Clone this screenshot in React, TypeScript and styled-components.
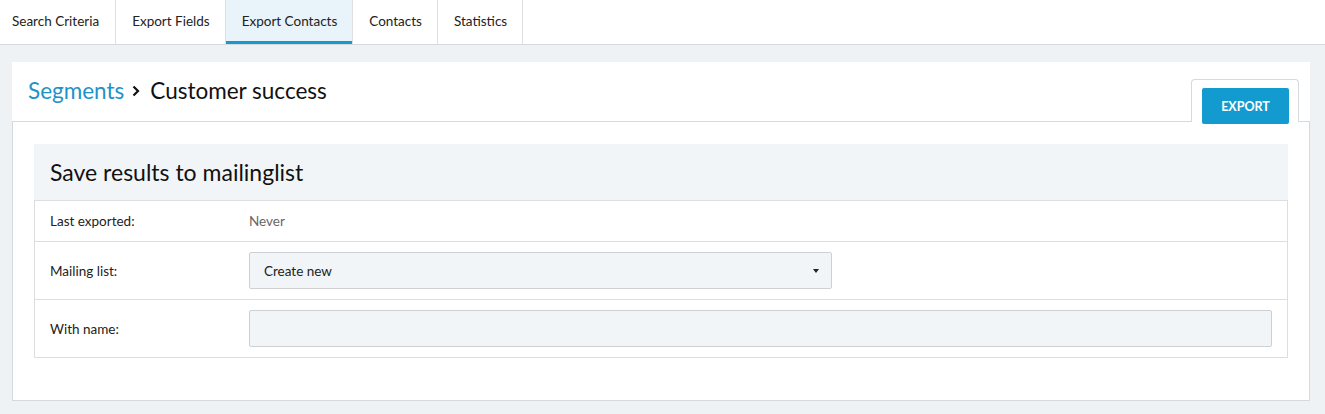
import React from "react";
import styled, { createGlobalStyle } from "styled-components";

const GlobalStyle = createGlobalStyle`
  html, body {
    margin: 0;
    padding: 0;
    background: #eef2f5;
    font-family: "Lato", "Open Sans", sans-serif;
    color: #222;
  }
`;

const tabs = ["Search Criteria", "Export Fields", "Export Contacts", "Contacts", "Statistics"];

const App: React.FC = () => {
  return (
    <>
      <GlobalStyle />
      <TabBar>
        {tabs.map((t) => (
          <Tab key={t} $active={t === "Export Contacts"}>
            {t}
          </Tab>
        ))}
      </TabBar>
      <Page>
        <Panel>
          <PanelHeader>
            <Title>
              <Crumb>Segments</Crumb>
              <Chevron viewBox="0 0 8 12" aria-hidden>
                <path d="M1.5 1.5 L6 6 L1.5 10.5" fill="none" stroke="#111" strokeWidth="2.2" />
              </Chevron>
              Customer success
            </Title>
            <ButtonTab>
              <ExportButton>EXPORT</ExportButton>
            </ButtonTab>
            <HeaderRest />
          </PanelHeader>
          <PanelBody>
            <SectionTitle>Save results to mailinglist</SectionTitle>
            <Table>
              <Row $height={41}>
                <Label>Last exported:</Label>
                <Value>Never</Value>
              </Row>
              <Row $height={58}>
                <Label>Mailing list:</Label>
                <Select>
                  Create new
                  <Caret />
                </Select>
              </Row>
              <Row $height={57} $last>
                <Label>With name:</Label>
                <TextInput type="text" />
              </Row>
            </Table>
          </PanelBody>
        </Panel>
      </Page>
    </>
  );
};

const TabBar = styled.div`
  display: flex;
  height: 44px;
  background: #fff;
  border-bottom: 1px solid #d6dadd;
`;

const Tab = styled.div<{ $active?: boolean }>`
  display: flex;
  align-items: center;
  padding: 0 15px 3px 16px;
  font-size: 13.5px;
  color: #222;
  border-right: 1px solid #dde1e4;
  background: ${(p) => (p.$active ? "#e8f3fa" : "#fff")};
  box-shadow: ${(p) => (p.$active ? "inset 0 -3px 0 #1799ce" : "none")};
  &:first-child {
    padding: 0 16px 3px 12px;
  }
`;

const Page = styled.div`
  padding: 17px 15px 13px 12px;
`;

const Panel = styled.div`
  background: #fff;
`;

const PanelHeader = styled.div`
  display: flex;
  align-items: flex-end;
  height: 60px;
`;

const Title = styled.h1`
  flex: 1;
  align-self: stretch;
  display: flex;
  align-items: center;
  margin: 0;
  padding: 0 0 3px 16px;
  font-size: 22.5px;
  font-weight: 400;
  color: #111;
  border-bottom: 1px solid #d6dadd;
`;

const Crumb = styled.span`
  color: #1d93c8;
`;

const Chevron = styled.svg`
  width: 8px;
  height: 12px;
  margin: 1px 10px 0 8px;
`;

const ButtonTab = styled.div`
  width: 108px;
  height: 43px;
  box-sizing: border-box;
  padding: 8px 9px 0 10px;
  border: 1px solid #d6dadd;
  border-bottom: none;
  border-radius: 4px 4px 0 0;
`;

const ExportButton = styled.button`
  display: block;
  width: 87px;
  height: 36px;
  border: none;
  border-radius: 2px;
  background: #139bd0;
  color: #fff;
  font-family: "Lato", sans-serif;
  font-size: 12.5px;
  font-weight: 700;
  cursor: pointer;
`;

const HeaderRest = styled.div`
  width: 11px;
  align-self: stretch;
  border-bottom: 1px solid #d6dadd;
`;

const PanelBody = styled.div`
  border: 1px solid #d6dadd;
  border-top: none;
  padding: 22px 21px 42px 21px;
`;

const SectionTitle = styled.h2`
  margin: 0;
  height: 56px;
  display: flex;
  align-items: center;
  padding-left: 16px;
  background: #f1f5f8;
  font-size: 23px;
  font-weight: 400;
  color: #111;
`;

const Table = styled.div`
  border: 1px solid #dcdfe2;
`;

const Row = styled.div<{ $height: number; $last?: boolean }>`
  display: grid;
  grid-template-columns: 199px 1fr;
  align-items: center;
  height: ${(p) => p.$height}px;
  box-sizing: border-box;
  padding: 0 15px;
  border-bottom: ${(p) => (p.$last ? "none" : "1px solid #dcdfe2")};
`;

const Label = styled.div`
  font-size: 13.5px;
  color: #222;
`;

const Value = styled.div`
  font-size: 13.5px;
  color: #666;
`;

const Select = styled.div`
  position: relative;
  width: 583px;
  height: 37px;
  box-sizing: border-box;
  display: flex;
  align-items: center;
  padding-left: 14px;
  background: #f1f5f8;
  border: 1px solid #cdd1d4;
  border-radius: 2px;
  font-size: 13.5px;
  color: #222;
`;

const Caret = styled.span`
  position: absolute;
  right: 12px;
  top: 16px;
  width: 0;
  height: 0;
  border-left: 3.5px solid transparent;
  border-right: 3.5px solid transparent;
  border-top: 4px solid #222;
`;

const TextInput = styled.input`
  width: 100%;
  height: 37px;
  box-sizing: border-box;
  background: #f1f5f8;
  border: 1px solid #cdd1d4;
  border-radius: 2px;
  outline: none;
  font-family: "Lato", sans-serif;
  font-size: 13.5px;
`;

export default App;
